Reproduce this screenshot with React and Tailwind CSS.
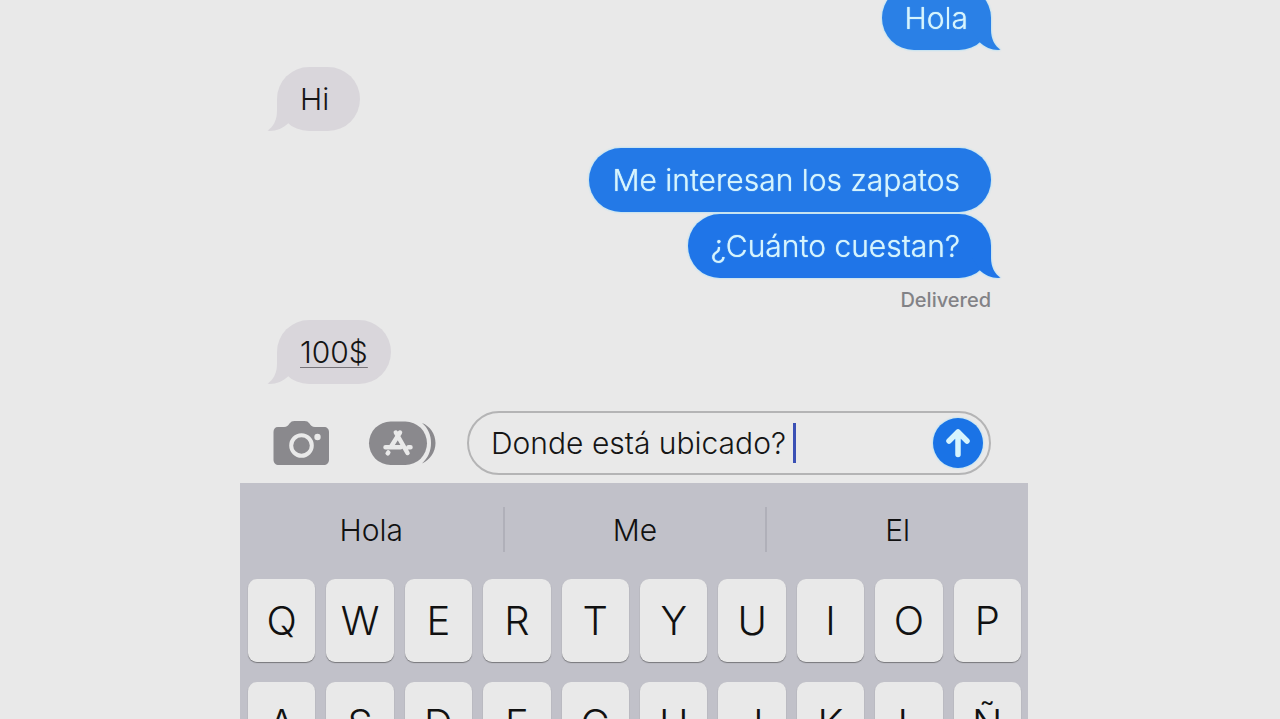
const messages = [
  { id: 1, text: 'Hola', sent: true, tail: true, tone: 'bg-[#2a80e6] text-[#d6f4fd]', tailColor: 'text-[#2a80e6]', spacing: 'px-[23px]', gap: '' },
  { id: 2, text: 'Hi', sent: false, tail: true, tone: 'bg-[#d9d6db] text-[#151515]', tailColor: 'text-[#d9d6db]', spacing: 'pl-[23px] pr-[31px]', gap: 'mt-[17px]' },
  { id: 3, text: 'Me interesan los zapatos', sent: true, tail: false, tone: 'bg-[#2379e7] text-[#d6f4fd]', tailColor: '', spacing: 'pl-[23px] pr-[31px]', gap: 'mt-[17px]' },
  { id: 4, text: '¿Cuánto cuestan?', sent: true, tail: true, tone: 'bg-[#1f75e8] text-[#d6f4fd]', tailColor: 'text-[#1f75e8]', spacing: 'pl-[23px] pr-[31px]', gap: 'mt-0.5', status: 'Delivered' },
  { id: 5, text: '100$', sent: false, tail: true, link: true, tone: 'bg-[#d9d6db] text-[#151515]', tailColor: 'text-[#d9d6db]', spacing: 'px-[23px]', gap: 'mt-[9px]' },
];

const suggestions = ['Hola', 'Me', 'El'];

const keyRows = [
  ['Q', 'W', 'E', 'R', 'T', 'Y', 'U', 'I', 'O', 'P'],
  ['A', 'S', 'D', 'F', 'G', 'H', 'J', 'K', 'L', 'Ñ'],
];

const Tail = ({ sent, color }) => (
  <svg
    viewBox="0 0 34 40"
    className={`absolute bottom-0 w-[34px] h-10 ${color} ${sent ? '-right-[11px]' : '-left-[11px] -scale-x-100'}`}
    fill="currentColor"
    aria-hidden="true"
  >
    <path d="M23 8V20C23 29 26.500 35.500 32.500 39.800C25 40.500 17 37.500 12 32.500L4 20V8Z" />
  </svg>
);

const Bubble = ({ message }) => (
  <div className={`flex flex-col ${message.sent ? 'items-end' : 'items-start'} ${message.gap}`}>
    <div
      className={`relative flex items-center h-16 rounded-[32px] text-[30px] leading-9 font-light whitespace-nowrap ${message.tone} ${message.spacing} ${
        message.sent ? '[text-shadow:0_0_1px_#d6f4fd] drop-shadow-[0_0_1px_#8fdcff]' : ''
      }`}
    >
      {message.tail && <Tail sent={message.sent} color={message.tailColor} />}
      {message.link ? (
        <a href="#precio" className="relative underline decoration-1 decoration-[#77757a] underline-offset-4">{message.text}</a>
      ) : (
        <span className="relative">{message.text}</span>
      )}
    </div>
    {message.status && (
      <p className="mt-[11px] text-[20px] leading-[22px] font-medium text-[#828286]">{message.status}</p>
    )}
  </div>
);

const CameraIcon = () => (
  <svg viewBox="0 0 56 44" className="w-14 h-11" aria-hidden="true">
    <path
      d="M5 6H11C14 6 15 4.500 16.500 2.500C18 .8 19 0 21.500 0H31.500C34 0 35 .8 36.500 2.500C38 4.500 39 6 42 6H51C54 6 56 8 56 11V38.500C56 42 54 44 50.500 44H6C2.500 44 .5 42 .5 38.500V11C.5 8 2 6 5 6Z"
      fill="#8a898d"
    />
    <circle cx="28.500" cy="24.500" r="10.300" fill="none" stroke="#e9e9e9" strokeWidth="4" />
    <circle cx="44.500" cy="16" r="3.200" fill="#e9e9e9" />
  </svg>
);

const AppsIcon = () => (
  <svg viewBox="0 0 68 44" className="w-[68px] h-11" aria-hidden="true">
    <rect x="1" y="0.500" width="58" height="43.500" rx="21.700" fill="#8a898d" />
    <path d="M54 2C62 5 67.500 13 67.500 22C67.500 31 62 39 54 42.500C60 37 63 30 63 22C63 14 60 7 54 2Z" fill="#8a898d" />
    <g fill="none" stroke="#e9e9e9" strokeWidth="4.500" strokeLinecap="round">
      <path d="M32 11.500L23.500 25M17.500 26.300H32.500M40.500 26.300H42.500M27.800 11.500L39.500 32M20.300 31.500L19.700 32.300" />
    </g>
  </svg>
);

const Composer = () => (
  <form className="flex items-center mt-[27px] pl-[33px] pr-[37px]" onSubmit={(e) => e.preventDefault()}>
    <button type="button" aria-label="Cámara"><CameraIcon /></button>
    <button type="button" aria-label="Aplicaciones" className="ml-[39px]"><AppsIcon /></button>
    <div className="flex-1 flex items-center h-16 ml-[31px] pl-[22px] pr-1.5 rounded-full border-2 border-[#b4b4b5]">
      <input
        type="text"
        aria-label="Mensaje"
        defaultValue="Donde está ubicado?"
        className="field-sizing-content min-w-0 bg-transparent text-[30px] leading-9 font-light text-[#151515] caret-transparent outline-none"
      />
      <span className="w-[3px] h-10 ml-[7px] shrink-0 bg-[#3b50b5]" />
      <button
        type="submit"
        aria-label="Enviar"
        className="flex items-center justify-center shrink-0 size-[50px] ml-auto rounded-full bg-[#1a73e6] drop-shadow-[0_0_1px_#8fdcff]"
      >
        <svg viewBox="0 0 50 50" className="size-[50px]" fill="none" stroke="#d6f4fd" strokeWidth="5.500" strokeLinecap="round" strokeLinejoin="round" aria-hidden="true">
          <path d="M25 36.500V14M16 23L25 14L34 23" />
        </svg>
      </button>
    </div>
  </form>
);

const Keyboard = () => (
  <section className="mt-2 bg-[#c1c1c9] text-[#111]">
    <div className="grid grid-cols-3 items-center h-[93px]">
      {suggestions.map((word, index) => (
        <button
          key={word}
          type="button"
          className={`h-[45px] text-[30px] leading-9 font-light ${index > 0 ? 'border-l-2 border-[#b0b0b9]' : ''}`}
        >
          {word}
        </button>
      ))}
    </div>
    <div className="flex flex-col gap-5 pt-[3px] pl-2 pr-[7px]">
      {keyRows.map((row) => (
        <div key={row[0]} className="grid grid-cols-10 gap-[11px]">
          {row.map((letter) => (
            <button
              key={letter}
              type="button"
              className="h-[83px] rounded-[9px] bg-[#e9e9e9] text-[40px] leading-12 font-light shadow-[0_1px_1px_#77777b]"
            >
              {letter}
            </button>
          ))}
        </div>
      ))}
    </div>
  </section>
);

export default function App() {
  return (
    <div className="h-screen overflow-hidden bg-[#e9e9e9] pl-60 pr-63 font-['Inter',sans-serif]">
      {/* the thread is scrolled, so the first bubble runs off the top edge */}
      <main className="-mt-3.5">
        <div className="px-[37px]">
          {messages.map((message) => (
            <Bubble key={message.id} message={message} />
          ))}
        </div>
        <Composer />
        <Keyboard />
      </main>
    </div>
  );
}
